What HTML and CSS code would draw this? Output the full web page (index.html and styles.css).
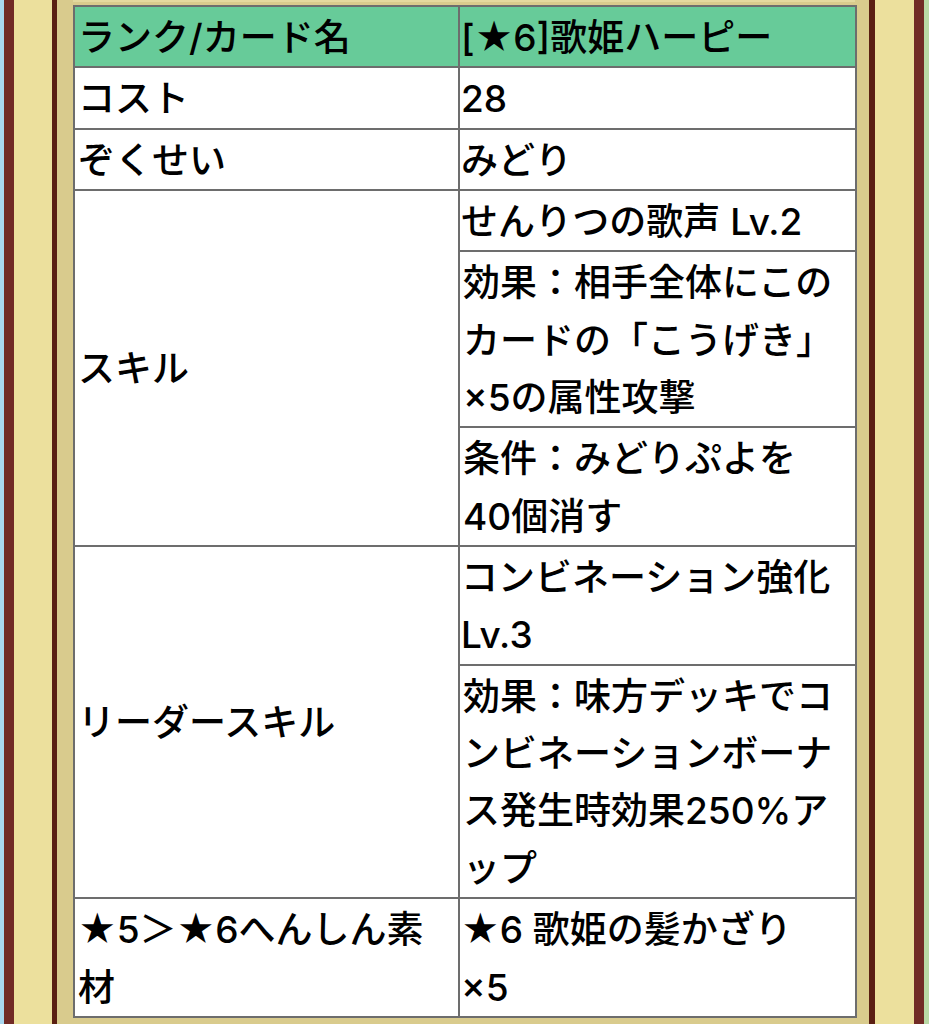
FILE: index.html
```html
<!DOCTYPE html>
<html lang="ja">
<head>
<meta charset="utf-8">
<link rel="stylesheet" href="styles.css">
</head>
<body>
<div class="outer">
  <div class="frame">
    <div class="topband"></div>
    <table class="card">
      <colgroup><col class="c1"><col class="c2"></colgroup>
      <tr class="head"><td>ランク/カード名</td><td>[★6]歌姫ハーピー</td></tr>
      <tr><td>コスト</td><td>28</td></tr>
      <tr><td>ぞくせい</td><td>みどり</td></tr>
      <tr><td rowspan="3">スキル</td><td>せんりつの歌声 Lv.2</td></tr>
      <tr><td>効果：相手全体にこのカードの「こうげき」×5の属性攻撃</td></tr>
      <tr><td>条件：みどりぷよを<br>40個消す</td></tr>
      <tr><td rowspan="2">リーダースキル</td><td>コンビネーション強化Lv.3</td></tr>
      <tr><td>効果：味方デッキでコンビネーションボーナス発生時効果250%アップ</td></tr>
      <tr><td class="top">★5＞★6へんしん素材</td><td>★6 歌姫の髪かざり×5</td></tr>
    </table>
  </div>
</div>
</body>
</html>
```

FILE: styles.css
```css
html, body {
  margin: 0;
  padding: 0;
}
body {
  width: 929px;
  height: 1024px;
  overflow: hidden;
  background: linear-gradient(to right, #a9d7ef 0, #a9d7ef 4px, #b9d9a6 4px);
  font-family: "Inter", "Noto Sans CJK JP", "Noto Sans", sans-serif;
  color: #000;
}
.outer {
  margin: 0 5px 0 4px;
  height: 1024px;
  box-sizing: border-box;
  border-left: 10px solid #712b26;
  border-right: 10px solid #712b26;
  background: #ece09d;
  padding: 0 39px 0 38px;
}
.frame {
  height: 1024px;
  box-sizing: border-box;
  border-left: 5px solid #5a1f12;
  border-right: 6px solid #5a1f12;
  background: #d9cb8d;
  padding: 0 14px 0 16px;
}
.topband {
  height: 2px;
  margin-bottom: 3px;
  background: #e4d99f;
}
.card {
  border-collapse: collapse;
  width: 782px;
  table-layout: fixed;
  background: #fff;
  border: 2px solid #6d6d6d;
  font-size: 37px;
  font-weight: 500;
  line-height: 57.35px;
}
.c1 { width: 385px; }
.c2 { width: 397px; }
.card td {
  border: 2px solid #6d6d6d;
  padding: 2px 5px 0 3px;
  vertical-align: middle;
}
.card td + td {
  padding: 2px 19px 0 1px;
}
.card td.top {
  vertical-align: top;
}
.head td {
  background: #67cb99;
}
```
